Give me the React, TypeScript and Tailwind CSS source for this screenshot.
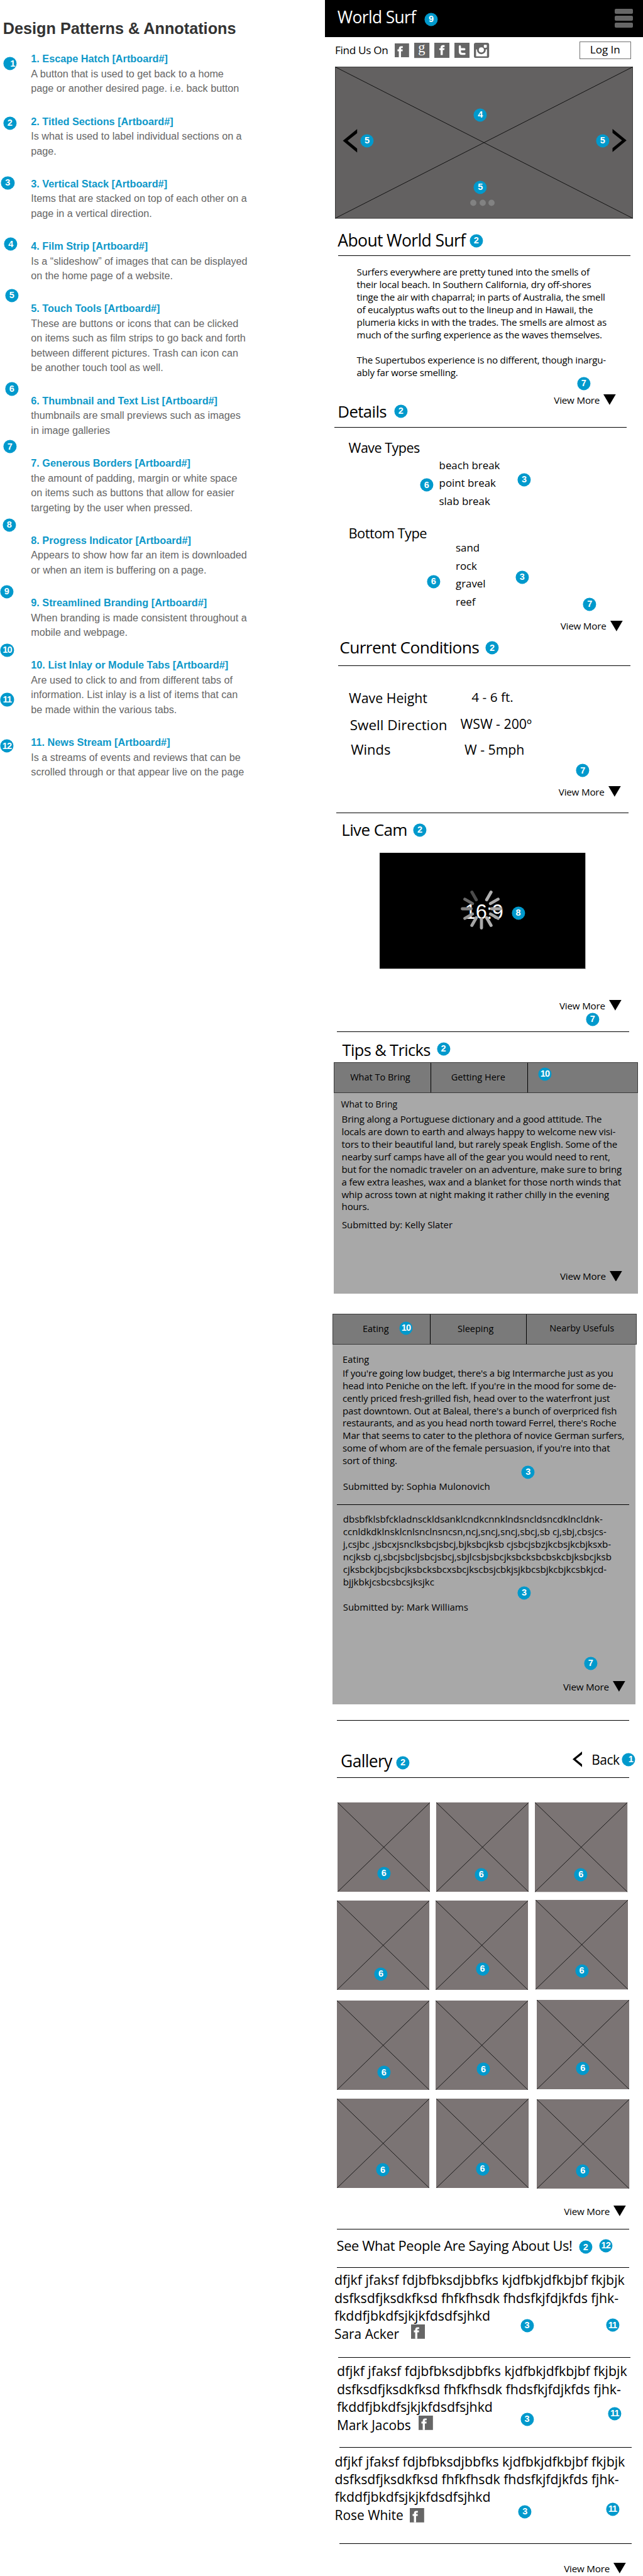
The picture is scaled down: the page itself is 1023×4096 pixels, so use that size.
import type { ReactNode } from "react";

const patterns: { title: string; lines: string[] }[] = [
  { title: "1. Escape Hatch [Artboard#]", lines: ["A button that is used to get back to a home", "page or another desired page. i.e. back button"] },
  { title: "2. Titled Sections [Artboard#]", lines: ["Is what is used to label individual sections on a", "page."] },
  { title: "3. Vertical Stack [Artboard#]", lines: ["Items that are stacked on top of each other on a", "page in a vertical direction."] },
  { title: "4. Film Strip [Artboard#]", lines: ["Is a “slideshow” of images that can be displayed", "on the home page of a website."] },
  {
    title: "5. Touch Tools [Artboard#]",
    lines: [
      "These are buttons or icons that can be clicked",
      "on items such as film strips to go back and forth",
      "between different pictures. Trash can icon can",
      "be another touch tool as well.",
    ],
  },
  { title: "6. Thumbnail and Text List [Artboard#]", lines: ["thumbnails are small previews such as images", "in image galleries"] },
  {
    title: "7. Generous Borders [Artboard#]",
    lines: ["the amount of padding, margin or white space", "on items such as buttons that allow for easier", "targeting by the user when pressed."],
  },
  { title: "8. Progress Indicator [Artboard#]", lines: ["Appears to show how far an item is downloaded", "or when an item is buffering on a page."] },
  { title: "9. Streamlined Branding [Artboard#]", lines: ["When branding is made consistent throughout a", "mobile and webpage."] },
  {
    title: "10. List Inlay or Module Tabs [Artboard#]",
    lines: ["Are used to click to and from different tabs of", "information. List inlay is a list of items that can", "be made within the various tabs."],
  },
  { title: "11. News Stream [Artboard#]", lines: ["Is a streams of events and reviews that can be", "scrolled through or that appear live on the page"] },
];

/* Annotation pins, laid over the artboard. */
const pins: [string, string][] = [
  ["1", "left-[16.3px] top-[101.3px] pl-[8px]"],
  ["2", "left-[15.8px] top-[195.8px]"],
  ["3", "left-[12.4px] top-[290.6px]"],
  ["4", "left-[17.3px] top-[388.3px]"],
  ["5", "left-[18.9px] top-[469.9px]"],
  ["6", "left-[18.9px] top-[618.4px]"],
  ["7", "left-[15.7px] top-[710.3px]"],
  ["8", "left-[14.7px] top-[835.1px]"],
  ["9", "left-[10.9px] top-[940.9px]"],
  ["10", "left-[11.4px] top-[1034.1px]"],
  ["11", "left-[11.4px] top-[1112.4px]"],
  ["12", "left-[10.9px] top-[1186.3px]"],
  ["9", "left-[686px] top-[30.6px]"],
  ["4", "left-[764.2px] top-[182.5px]"],
  ["5", "left-[584px] top-[223.6px]"],
  ["5", "left-[958.8px] top-[223.6px]"],
  ["5", "left-[764.2px] top-[298px]"],
  ["2", "left-[757.7px] top-[382.9px]"],
  ["7", "left-[928.9px] top-[609.7px]"],
  ["2", "left-[637.7px] top-[653.5px]"],
  ["6", "left-[678.8px] top-[771.2px]"],
  ["3", "left-[834px] top-[762.8px]"],
  ["6", "left-[689.9px] top-[924.7px]"],
  ["3", "left-[830.7px] top-[917.8px]"],
  ["7", "left-[938.3px] top-[961.1px]"],
  ["2", "left-[783.1px] top-[1030.2px]"],
  ["7", "left-[927.2px] top-[1225.2px]"],
  ["2", "left-[668px] top-[1319.6px]"],
  ["8", "left-[824.5px] top-[1451.7px]"],
  ["7", "left-[942.9px] top-[1620.9px]"],
  ["2", "left-[705.5px] top-[1668px]"],
  ["10", "left-[866.9px] top-[1707.7px]"],
  ["10", "left-[645.9px] top-[2111.5px]"],
  ["3", "left-[840.2px] top-[2340.5px]"],
  ["3", "left-[834px] top-[2533.1px]"],
  ["7", "left-[939.9px] top-[2644.6px]"],
  ["2", "left-[641px] top-[2802.5px]"],
  ["1", "left-[999.9px] top-[2797.7px] pl-[8px]"],
  ["6", "left-[610.7px] top-[2978.8px]"],
  ["6", "left-[765.9px] top-[2980.8px]"],
  ["6", "left-[924.3px] top-[2980.8px]"],
  ["6", "left-[606.1px] top-[3138.7px]"],
  ["6", "left-[767.5px] top-[3130.5px]"],
  ["6", "left-[925.6px] top-[3133.9px]"],
  ["6", "left-[610.7px] top-[3295.2px]"],
  ["6", "left-[769.1px] top-[3290.3px]"],
  ["6", "left-[927.2px] top-[3288.9px]"],
  ["6", "left-[609px] top-[3450.2px]"],
  ["6", "left-[767.5px] top-[3448.7px]"],
  ["6", "left-[927.2px] top-[3451.6px]"],
  ["2", "left-[931.8px] top-[3573.2px]"],
  ["12", "left-[963.7px] top-[3570.5px]"],
  ["3", "left-[838.6px] top-[3697.9px]"],
  ["11", "left-[974.5px] top-[3697.2px]"],
  ["3", "left-[838.6px] top-[3846.6px]"],
  ["11", "left-[977.8px] top-[3838px]"],
  ["3", "left-[835.3px] top-[3993.6px]"],
  ["11", "left-[974.5px] top-[3989.7px]"],
];

function Pin({ n, at }: { n: string; at: string }) {
  return (
    <span
      className={`absolute flex size-[21.2px] -translate-x-1/2 -translate-y-1/2 items-center justify-center rounded-full bg-[#0099cc] font-['Liberation_Sans',sans-serif] text-[14.5px] leading-none font-bold text-white ${n.length > 1 ? "tracking-[-0.8px]" : ""} ${at}`}
    >
      {n}
    </span>
  );
}

function Rule({ className }: { className: string }) {
  return <div className={`h-px w-[465px] shrink-0 bg-black ${className}`} />;
}

function ViewMore({ className }: { className: string }) {
  return (
    <div className={`flex h-5 shrink-0 items-start text-[15.2px] leading-5 tracking-[-0.2px] ${className}`}>
      <span className="w-[79.2px]">View More</span>
      <svg className="mt-[1.7px] h-[16.8px] w-[19.7px]" viewBox="0 0 20 17" preserveAspectRatio="none">
        <path d="M0 0H20L10 17Z" />
      </svg>
    </div>
  );
}

function Lines({ lines, className }: { lines: string[]; className: string }) {
  return (
    <div className={className}>
      {lines.map((line, i) => (
        <div key={i}>{line || "\u00a0"}</div>
      ))}
    </div>
  );
}

function FacebookCorner({ className }: { className: string }) {
  return (
    <svg className={`h-[22.8px] w-[22.8px] shrink-0 ${className}`} viewBox="0 0 87 87" preserveAspectRatio="none">
      <rect width="87" height="87" fill="#666" />
      <path d="M25 87V48H17V36H25V32Q25 17 40 17H49V28H43Q38 28 38 33V36H48V48H38V87Z" fill="#fff" />
    </svg>
  );
}

function SocialIcons() {
  return (
    <>
      <FacebookCorner className="mt-px" />
      <svg className="ml-[8.3px] size-[24.2px] overflow-visible" viewBox="0 0 92 92">
        <rect width="92" height="92" fill="#666" />
        <text x="45" y="57" textAnchor="middle" fill="#fff" fontFamily="Liberation Serif" fontSize="85">
          g
        </text>
      </svg>
      <svg className="ml-[7.4px] size-[24.2px]" viewBox="0 0 92 92">
        <rect width="92" height="92" fill="#666" />
        <path d="M38 74V44H30V33H38V29Q38 14 53 14H62V26H56Q51 26 51 31V33H62L60 44H51V74Z" fill="#fff" />
      </svg>
      <svg className="ml-[7.4px] size-[24.2px]" viewBox="0 0 92 92">
        <rect width="92" height="92" fill="#666" />
        <path d="M33 22V54Q33 67 46 67H61M33 39H60" fill="none" stroke="#fff" strokeWidth="13" strokeLinecap="round" />
      </svg>
      <svg className="ml-[7.6px] size-[24.2px]" viewBox="0 0 92 92">
        <rect width="92" height="92" rx="11" fill="#666" />
        <path d="M13 40H79V82H13Z" fill="#fff" />
        <circle cx="45" cy="42" r="27" fill="#666" />
        <path d="M19 30H72V40H19Z" fill="#666" />
        <circle cx="45" cy="43" r="15.5" fill="#fff" />
        <rect x="60" y="12" width="18" height="18" rx="4" fill="#fff" />
      </svg>
    </>
  );
}

function FilmStrip() {
  return (
    <div className="ml-[15.8px] h-[241.6px] w-[474px] shrink-0">
      <svg className="size-full" viewBox="0 0 474 241.6">
        <rect x="0.5" y="0.5" width="473" height="240.6" fill="#636161" stroke="#3c3c3c" />
        <path d="M0.5 0.5L473.5 241M473.5 0.5L0.5 241" stroke="#0a0a0a" strokeWidth="0.9" />
        <path d="M35.2 99.3L12.5 117.8L35.2 136.6V130.2L20 117.8L35.2 105.8Z" />
        <path d="M441.5 98.9L463.8 117.3L441.5 135.8V129.4L456.6 117.3L441.5 105.2Z" />
        <g fill="#828282">
          <circle cx="220" cy="216.5" r="4.9" />
          <circle cx="235" cy="216.5" r="4.9" />
          <circle cx="249" cy="216.5" r="4.9" />
        </g>
      </svg>
    </div>
  );
}

const spokes: [number, string][] = [
  [30, "#b0b0b0"],
  [60, "#acacac"],
  [90, "#a2a2a2"],
  [120, "#a6a6a6"],
  [150, "#b0b0b0"],
  [180, "#aaaaaa"],
  [210, "#a4a4a4"],
  [240, "#969696"],
  [270, "#828282"],
  [300, "#686868"],
  [330, "#4c4c4c"],
];

function LiveCam() {
  return (
    <div className="relative mt-[21.3px] ml-[86.8px] flex h-[184.4px] w-[328px] shrink-0 items-center justify-center border-r border-b border-[#b5b5b5] bg-black">
      <span className="pt-[4px] pl-[5px] font-['Liberation_Sans',sans-serif] text-[32.5px] leading-none tracking-[-0.6px] text-white">16:9</span>
      <svg className="absolute top-[53.5px] left-[127.7px] size-[70px]" viewBox="-35 -35 70 70">
        {spokes.map(([angle, color]) => (
          <path key={angle} d="M0 -16.5V-30.5" stroke={color} strokeWidth="4.9" strokeLinecap="round" transform={`rotate(${angle})`} />
        ))}
      </svg>
    </div>
  );
}

function Thumb({ className }: { className: string }) {
  return (
    <svg className={`h-[142.3px] w-[147.2px] shrink-0 ${className}`} viewBox="0 0 147 142" preserveAspectRatio="none">
      <rect width="147" height="142" fill="#7b7474" />
      <path d="M0 0L147 142M147 0L0 142" stroke="#111" strokeWidth="0.9" />
    </svg>
  );
}

function TabBar({ className, children }: { className: string; children: ReactNode }) {
  return <div className={`flex h-[48.5px] shrink-0 border border-[#3a3a3a] bg-[#7a7a7a] pt-[12.6px] text-[14.5px] leading-5 ${className}`}>{children}</div>;
}

const gibberish = ["dfjkf jfaksf fdjbfbksdjbbfks kjdfbkjdfkbjbf fkjbjk", "dsfksdfjksdkfksd fhfkfhsdk fhdsfkjfdjkfds fjhk-", "fkddfjbkdfsjkjkfdsdfsjhkd"];

function Review({ name, className, iconClass }: { name: string; className: string; iconClass: string }) {
  return (
    <div className={`text-[21.3px] leading-[28.45px] ${className}`}>
      <Lines lines={gibberish} className="" />
      <div className="flex h-[28.45px] items-start">
        <span className="text-[20.9px]">{name}</span>
        <div className={`ml-auto shrink-0 ${iconClass}`}>
          <FacebookCorner className="" />
        </div>
      </div>
    </div>
  );
}

function Heading({ className, children }: { className: string; children: ReactNode }) {
  return <h2 className={`leading-8 tracking-[-0.024em] ${className}`}>{children}</h2>;
}

export default function App() {
  return (
    <div className="relative flex h-[4096px] w-[1023px] overflow-hidden bg-white font-['Open_Sans',sans-serif] whitespace-nowrap text-black">
      <aside className="w-[517px] shrink-0 font-['Liberation_Sans',sans-serif]">
        <h1 className="mt-[28.6px] ml-[4.7px] text-[25.25px] leading-8 font-bold text-[#333]">Design Patterns &amp; Annotations</h1>
        <div className="mt-[21.7px] ml-[49.3px] flex flex-col gap-[28.8px] text-[16.18px] leading-[23.5px] text-[#666]">
          {patterns.map((p) => (
            <div key={p.title}>
              <h3 className="text-[16.25px] font-bold text-[#0d98c9]">{p.title}</h3>
              <Lines lines={p.lines} className="" />
            </div>
          ))}
        </div>
      </aside>

      <main className="flex w-[506px] shrink-0 flex-col">
        <header className="flex h-[58.5px] shrink-0 items-center justify-between bg-black pr-[16px] pl-[19.8px]">
          <span className="pb-[3.6px] text-[26.4px] leading-8 tracking-[-0.024em] text-white">World Surf</span>
          <div className="flex flex-col gap-[3.4px] pb-px">
            <div className="h-[7.7px] w-[29px] rounded-[2px] bg-[#666]" />
            <div className="h-[7.7px] w-[29px] rounded-[2px] bg-[#666]" />
            <div className="h-[7.7px] w-[29px] rounded-[2px] bg-[#666]" />
          </div>
        </header>

        <div className="flex h-[47.8px] shrink-0 items-start pt-[9.2px] pl-[16px]">
          <span className="w-[95.3px] text-[17.2px] leading-6 tracking-[-0.02em]">Find Us On</span>
          <SocialIcons />
          <div className="mt-[-2px] mr-[19px] ml-auto flex h-[28.4px] w-[82.4px] items-center justify-center border-[1.5px] border-[#707070] pb-px text-[17px] leading-6">Log In</div>
        </div>

        <FilmStrip />

        <Heading className="mt-[18.6px] ml-[20.3px] text-[26.55px]">About World Surf</Heading>
        <Rule className="mt-[7.9px] ml-[21px]" />
        <Lines
          className="mt-[16px] ml-[50.6px] text-[15.1px] leading-[19.94px] tracking-[-0.0125em]"
          lines={[
            "Surfers everywhere are pretty tuned into the smells of",
            "their local beach. In Southern California, dry off-shores",
            "tinge the air with chaparral; in parts of Australia, the smell",
            "of eucalyptus wafts out to the lineup and in Hawaii, the",
            "plumeria kicks in with the trades. The smells are almost as",
            "much of the surfing experience as the waves themselves.",
            "",
            "The Supertubos experience is no different, though inargu-",
            "ably far worse smelling.",
          ]}
        />
        <ViewMore className="mt-[22.8px] ml-[364.3px]" />

        <Heading className="mt-[-8px] ml-[20.3px] text-[25.8px]">Details</Heading>
        <Rule className="mt-[8.9px] ml-[15.4px]" />
        <h3 className="mt-[18.4px] ml-[37.6px] text-[21.5px] leading-7 tracking-[-0.024em]">Wave Types</h3>
        <Lines className="ml-[181.6px] text-[16.85px] leading-[28.45px]" lines={["beach break", "point break", "slab break"]} />
        <h3 className="mt-[22.5px] ml-[37.5px] text-[21.8px] leading-7 tracking-[-0.024em]">Bottom Type</h3>
        <Lines className="mt-[-4.3px] ml-[208px] text-[16.85px] leading-[28.45px]" lines={["sand", "rock", "gravel", "reef"]} />
        <ViewMore className="mt-[13.9px] ml-[374.7px]" />

        <Heading className="mt-[7.9px] ml-[23.2px] text-[26.35px]">Current Conditions</Heading>
        <Rule className="mt-[12.6px] ml-[21px]" />
        <div className="mt-[36.9px] flex h-7 shrink-0 pl-[38px] text-[21.32px] leading-7">
          <span className="w-[195.3px]">Wave Height</span>
          <span className="mt-[-1.4px] text-[20.78px]">4 - 6 ft.</span>
        </div>
        <div className="mt-[15px] flex h-7 shrink-0 pl-[39.8px] text-[22.43px] leading-7">
          <span className="w-[175.8px]">Swell Direction</span>
          <span className="mt-[-1.4px] text-[21.29px]">WSW - 200º</span>
        </div>
        <div className="mt-[11px] flex h-7 shrink-0 pl-[41.2px] text-[21.96px] leading-7">
          <span className="w-[180.8px]">Winds</span>
          <span className="text-[21.28px]">W - 5mph</span>
        </div>
        <ViewMore className="mt-[43.1px] ml-[371.8px]" />
        <Rule className="mt-[23.8px] ml-[17.7px]" />

        <Heading className="mt-[9.4px] ml-[26.2px] text-[26.05px]">Live Cam</Heading>
        <LiveCam />
        <ViewMore className="mt-[48.3px] ml-[373px]" />
        <Rule className="mt-[31.7px] ml-[19.4px]" />

        <Heading className="mt-[11.9px] ml-[27.6px] text-[25.4px]">Tips &amp; Tricks</Heading>
        <section className="mt-[4px] ml-[13.8px] flex h-[367.5px] w-[484.4px] shrink-0 flex-col bg-[#a8a8a8]">
          <TabBar className="w-[484.4px]">
            <span className="-mt-[12.6px] w-[154.7px] border-r border-black pt-[12.6px] pl-[25.4px]">What To Bring</span>
            <span className="-mt-[12.6px] w-[153.6px] border-r border-black pt-[12.6px] pl-[31.3px]">Getting Here</span>
          </TabBar>
          <div className="mt-[8.2px] ml-[11.7px] text-[14.04px] leading-5">What to Bring</div>
          <Lines
            className="mt-[4.3px] ml-[12.8px] text-[15.05px] leading-[19.88px] tracking-[-0.0125em]"
            lines={[
              "Bring along a Portuguese dictionary and a good attitude. The",
              "locals are down to earth and always happy to welcome new visi-",
              "tors to their beautiful land, but rarely speak English. Some of the",
              "nearby surf camps have all of the gear you would need to rent,",
              "but for the nomadic traveler on an adventure, make sure to bring",
              "a few extra leashes, wax and a blanket for those north winds that",
              "whip across town at night making it rather chilly in the evening",
              "hours.",
            ]}
          />
          <div className="mt-[8.1px] ml-[13.2px] text-[14.85px] leading-5">Submitted by: Kelly Slater</div>
          <ViewMore className="mt-[61.5px] ml-[360.2px]" />
        </section>

        <section className="mt-[32.5px] ml-[11.9px] flex h-[621.1px] w-[482.4px] shrink-0 flex-col bg-[#a8a8a8]">
          <TabBar className="w-[484.2px]">
            <span className="-mt-[12.6px] w-[155px] border-r border-black pt-[12.6px] pl-[47px]">Eating</span>
            <span className="-mt-[12.6px] w-[153.5px] border-r border-black pt-[12.6px] pl-[43.2px]">Sleeping</span>
            <span className="-mt-[13.4px] pt-[12.6px] pl-[35.8px]">Nearby Usefuls</span>
          </TabBar>
          <div className="mt-[12.7px] ml-[16.2px] text-[14.7px] leading-5">Eating</div>
          <Lines
            className="mt-[3.2px] ml-[16.2px] text-[15.03px] leading-[19.92px] tracking-[-0.0125em]"
            lines={[
              "If you're going low budget, there's a big Intermarche just as you",
              "head into Peniche on the left. If you're in the mood for some de-",
              "cently priced fresh-grilled fish, head over to the waterfront just",
              "past downtown. Out at Baleal, there's a bunch of overpriced fish",
              "restaurants, and as you head north toward Ferrel, there's Roche",
              "Mar that seems to cater to the plethora of novice German surfers,",
              "some of whom are of the female persuasion, if you're into that",
              "sort of thing.",
            ]}
          />
          <div className="mt-[19.6px] ml-[16.8px] text-[15px] leading-5">Submitted by: Sophia Mulonovich</div>
          <Rule className="mt-[19.4px] ml-[7.5px]" />
          <Lines
            className="mt-[12.8px] ml-[16.8px] text-[15.08px] leading-[19.92px]"
            lines={[
              "dbsbfklsbfckladnsckldsanklcndkcnnklndsncldsncdklncldnk-",
              "ccnldkdklnsklcnlsnclnsncsn,ncj,sncj,sncj,sbcj,sb cj,sbj,cbsjcs-",
              "j,csjbc ,jsbcxjsnclksbcjsbcj,bjksbcjksb cjsbcjsbzjkcbsjkcbjksxb-",
              "ncjksb cj,sbcjsbcljsbcjsbcj,sbjlcsbjsbcjksbcksbcbskcbjksbcjksb",
              "cjksbckjbcjsbcjksbcksbcxsbcjkscbsjcbkjsjkbcsbjkcbjkcsbkjcd-",
              "bjjkbkjcsbcsbcsjksjkc",
            ]}
          />
          <div className="mt-[19.5px] ml-[16.8px] text-[15px] leading-5">Submitted by: Mark Williams</div>
          <ViewMore className="mt-[106.6px] ml-[367px]" />
        </section>
        <Rule className="mt-[24.3px] ml-[19.4px]" />

        <div className="mt-[47.9px] flex h-8 shrink-0 items-start pl-[25.1px] leading-8">
          <h2 className="w-[368.5px] text-[26.4px] tracking-[-0.024em]">Gallery</h2>
          <svg className="mt-[1.1px] h-[24.8px] w-[15px]" viewBox="0 0 15 24.8">
            <path d="M15 0L0 12.2L15 24.8V20.3L5 12.2L15 4.4Z" />
          </svg>
          <span className="mt-[-1.9px] ml-[15.6px] text-[20.9px] tracking-[-0.02em]">Back</span>
        </div>
        <Rule className="mt-[10.3px] ml-[19.4px]" />
        <div className="mt-[38.8px] flex shrink-0 pl-[20.3px]">
          <Thumb className="" />
          <Thumb className="ml-[9.4px]" />
          <Thumb className="mt-[0.5px] ml-[10.3px]" />
        </div>
        <div className="mt-[13.6px] flex shrink-0 pl-[18.7px]">
          <Thumb className="" />
          <Thumb className="ml-[10.3px]" />
          <Thumb className="mt-[-0.9px] ml-[11.8px]" />
        </div>
        <div className="mt-[16.1px] flex shrink-0 pl-[18.7px]">
          <Thumb className="" />
          <Thumb className="ml-[10.3px]" />
          <Thumb className="mt-[-0.9px] ml-[13.5px]" />
        </div>
        <div className="mt-[14.2px] flex h-[142px] shrink-0 pl-[18.7px]">
          <Thumb className="" />
          <Thumb className="ml-[10.9px]" />
          <Thumb className="mt-[1px] ml-[13.5px]" />
        </div>
        <ViewMore className="mt-[26.6px] ml-[380.2px]" />
        <Rule className="mt-[18.6px] ml-[19.4px]" />

        <h2 className="mt-[11.8px] ml-[18.6px] text-[21.8px] leading-7 tracking-[-0.016em]">See What People Are Saying About Us!</h2>
        <Rule className="mt-[19.5px] ml-[19.4px]" />
        <Review name="Sara Acker" className="mt-[5.9px] ml-[15px] w-[144.3px]" iconClass="mt-[-0.6px]" />
        <Rule className="mt-[23.2px] ml-[21px]" />
        <Review name="Mark Jacobs" className="mt-[7.1px] ml-[18.9px] w-[153.1px]" iconClass="mt-[-0.6px]" />
        <Rule className="mt-[20.4px] ml-[23.3px]" />
        <Review name="Rose White" className="mt-[7.9px] ml-[15.6px] w-[142.3px]" iconClass="mt-[3.3px]" />
        <Rule className="mt-[31px] ml-[22.6px]" />
        <ViewMore className="mt-[28.4px] ml-[380.2px]" />
      </main>

      {pins.map(([n, at], i) => (
        <Pin key={i} n={n} at={at} />
      ))}
    </div>
  );
}
